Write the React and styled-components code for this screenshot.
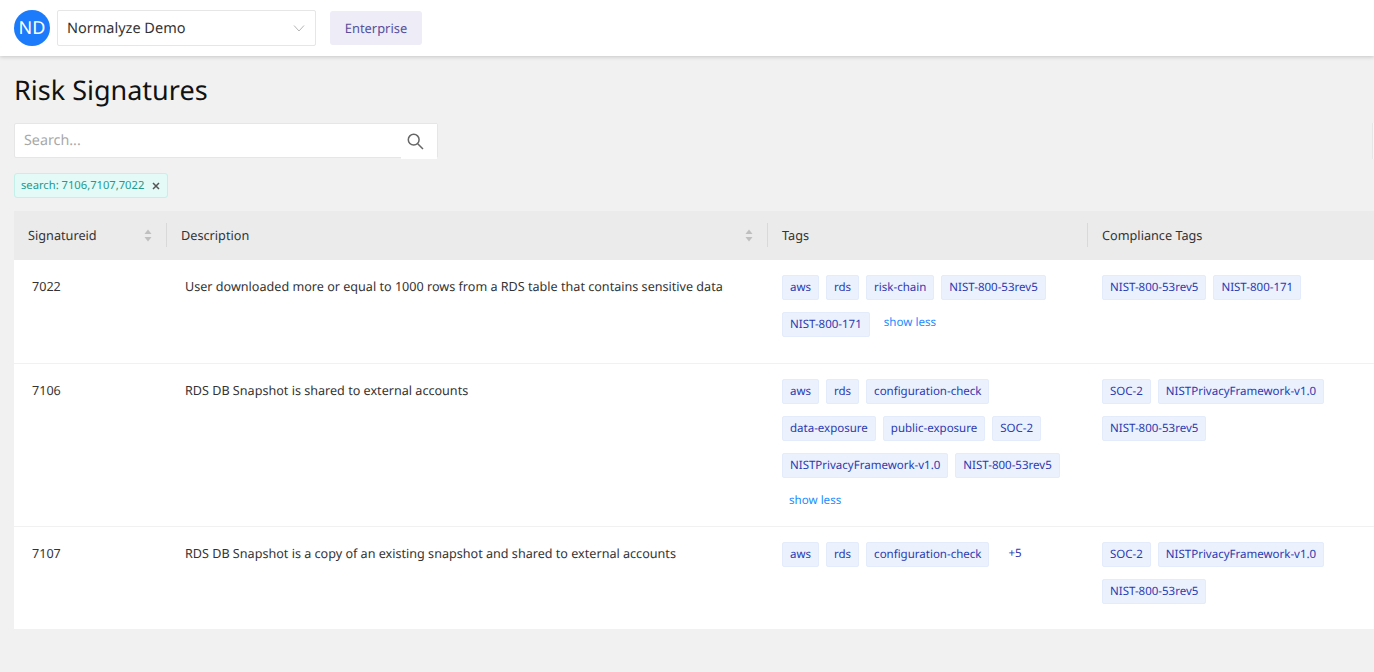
import React from "react";
import styled, { createGlobalStyle } from "styled-components";

const GlobalStyle = createGlobalStyle`
    html, body {
        margin: 0;
        padding: 0;
        background: #f1f1f1;
        font-family: "Noto Sans", "Open Sans", sans-serif;
        text-rendering: geometricPrecision;
    }
    * {
        box-sizing: border-box;
    }
`;

const TopBar = styled.header`
    display: flex;
    align-items: center;
    height: 56px;
    padding: 0 14px;
    background: #fff;
    box-shadow: 0 1px 4px rgba(0, 0, 0, 0.18);
`;

const Avatar = styled.div`
    display: flex;
    align-items: center;
    justify-content: center;
    width: 36px;
    height: 36px;
    border-radius: 50%;
    background: #1b7bfb;
    color: #fff;
    font-size: 18px;
`;

const AccountSelect = styled.div`
    display: flex;
    align-items: center;
    justify-content: space-between;
    width: 259px;
    height: 36px;
    margin-left: 7px;
    padding: 0 10px 0 9px;
    background: #fff;
    border: 1px solid #e6e6e6;
    border-radius: 2px;
    color: #333;
    font-size: 14.5px;
`;

const PlanBadge = styled.div`
    display: flex;
    align-items: center;
    justify-content: center;
    width: 92px;
    height: 34px;
    margin-left: 14px;
    background: #edecf7;
    border-radius: 3px;
    color: #56509c;
    font-size: 12.9px;
`;

const Content = styled.main`
    padding: 15px 0 43px 14px;
`;

const PageTitle = styled.h1`
    margin: 0;
    height: 37px;
    color: #111;
    font-size: 27px;
    font-weight: 400;
    line-height: 38px;
`;

const SearchRow = styled.div`
    display: flex;
    justify-content: space-between;
    margin-top: 15px;
`;

const SearchBox = styled.div`
    display: flex;
    width: 424px;
    height: 35px;
    background: #fff;
    border: 1px solid #e6e6e6;
    border-radius: 2px;
`;

const SearchInput = styled.div`
    flex: 1;
    padding-left: 9px;
    color: #a8a8a8;
    font-size: 14.3px;
    line-height: 33px;
`;

const SearchButton = styled.div`
    display: flex;
    align-items: center;
    justify-content: flex-start;
    width: 36px;
    height: 35px;
    padding-left: 6px;
    background: #fff;
    color: #666;
`;

const EdgeButton = styled.div`
    width: 2px;
    height: 36px;
    background: #f8f8f8;
    border-left: 1px solid #e6e6e6;
`;

const FilterTag = styled.div`
    display: flex;
    align-items: center;
    gap: 8px;
    width: fit-content;
    height: 25px;
    margin-top: 14px;
    padding: 0 7px 0 6px;
    background: #e3faf7;
    border: 1px solid #c4f0ea;
    border-radius: 3px;
    color: #22998f;
    font-size: 11.2px;
`;

const CloseIcon = styled.svg`
    width: 8px;
    height: 8px;
    stroke: #555;
    stroke-width: 1.5;
`;

const Table = styled.section`
    margin-top: 13px;
    background: #fff;
`;

const Columns = styled.div`
    display: grid;
    grid-template-columns: 153px 601px 320px 1fr;
`;

const HeadRow = styled(Columns)`
    height: 49px;
    padding-bottom: 1px;
    background: #ebebeb;
`;

const HeadCell = styled.div`
    position: relative;
    display: flex;
    align-items: center;
    justify-content: space-between;
    padding: 0 14px;
    color: #333;
    font-size: 12.7px;

    &:not(:last-child)::after {
        content: "";
        position: absolute;
        top: 12px;
        right: 0;
        width: 1px;
        height: 24px;
        background: #d9d9d9;
    }
`;

const SortIcon = styled.svg`
    width: 8px;
    height: 13px;
    margin-right: 1px;
    fill: #bfbfbf;
`;

const BodyRow = styled(Columns)`
    border-bottom: 1px solid #f1f1f1;

    &:last-child {
        border-bottom: 0;
    }
`;

const TextCell = styled.div`
    padding: 16px 18px;
    color: #333;
    font-size: 12.6px;
    line-height: 22px;
`;

const TagCell = styled.div`
    display: flex;
    flex-wrap: wrap;
    align-content: flex-start;
    gap: 12px 7px;
    padding: 15px 14px 11px;
    min-height: ${(props) => props.$minHeight || 0}px;
`;

const Tag = styled.span`
    height: 25px;
    padding: 0 7px;
    background: #ebf1fd;
    border: 1px solid #e4ecfb;
    border-radius: 2px;
    color: #2a3ab1;
    font-size: 11.5px;
    line-height: 24px;
    white-space: nowrap;
`;

const ShowLess = styled.a`
    height: 25px;
    padding: 0 7px;
    color: #1a8cff;
    font-size: 11.6px;
    line-height: 22px;
`;

const MoreCount = styled.span`
    height: 25px;
    padding: 0 12px;
    color: #2a3ab1;
    font-size: 11.5px;
    line-height: 24px;
`;

const RISKS = [
    {
        id: "7022",
        description: "User downloaded more or equal to 1000 rows from a RDS table that contains sensitive data",
        tags: ["aws", "rds", "risk-chain", "NIST-800-53rev5", "NIST-800-171"],
        compliance: ["NIST-800-53rev5", "NIST-800-171"],
        showLess: true,
        minHeight: 103,
    },
    {
        id: "7106",
        description: "RDS DB Snapshot is shared to external accounts",
        tags: ["aws", "rds", "configuration-check", "data-exposure", "public-exposure", "SOC-2", "NISTPrivacyFramework-v1.0", "NIST-800-53rev5"],
        compliance: ["SOC-2", "NISTPrivacyFramework-v1.0", "NIST-800-53rev5"],
        showLess: true,
        minHeight: 162,
    },
    {
        id: "7107",
        description: "RDS DB Snapshot is a copy of an existing snapshot and shared to external accounts",
        tags: ["aws", "rds", "configuration-check"],
        compliance: ["SOC-2", "NISTPrivacyFramework-v1.0", "NIST-800-53rev5"],
        more: 5,
        minHeight: 102,
    },
];

function Sorter() {
    return (
        <SortIcon viewBox="0 0 8 13">
            <path d="M4 0.5 L7.5 5 L0.5 5 Z" />
            <path d="M4 12.5 L7.5 8 L0.5 8 Z" />
        </SortIcon>
    );
}

export default function App() {
    return (
        <>
            <GlobalStyle />
            <TopBar>
                <Avatar>ND</Avatar>
                <AccountSelect>
                    Normalyze Demo
                    <svg width="12" height="12" viewBox="0 0 12 12" fill="none" stroke="#b5b5b5" strokeWidth="1">
                        <path d="M1 3.5 L6 9 L11 3.5" />
                    </svg>
                </AccountSelect>
                <PlanBadge>Enterprise</PlanBadge>
            </TopBar>
            <Content>
                <PageTitle>Risk Signatures</PageTitle>
                <SearchRow>
                    <SearchBox>
                        <SearchInput>Search...</SearchInput>
                        <SearchButton>
                            <svg width="17" height="17" viewBox="0 0 17 17" fill="none" stroke="currentColor" strokeWidth="1.5">
                                <circle cx="6.7" cy="6.7" r="5.4" />
                                <path d="M10.7 10.7 L16 16" />
                            </svg>
                        </SearchButton>
                    </SearchBox>
                    <EdgeButton />
                </SearchRow>
                <FilterTag>
                    search: 7106,7107,7022
                    <CloseIcon viewBox="0 0 8 8">
                        <path d="M1 1 L7 7 M7 1 L1 7" />
                    </CloseIcon>
                </FilterTag>
                <Table>
                    <HeadRow>
                        <HeadCell>Signatureid<Sorter /></HeadCell>
                        <HeadCell>Description<Sorter /></HeadCell>
                        <HeadCell>Tags</HeadCell>
                        <HeadCell>Compliance Tags</HeadCell>
                    </HeadRow>
                    {RISKS.map((risk) => (
                        <BodyRow key={risk.id}>
                            <TextCell>{risk.id}</TextCell>
                            <TextCell>{risk.description}</TextCell>
                            <TagCell $minHeight={risk.minHeight}>
                                {risk.tags.map((tag) => <Tag key={tag}>{tag}</Tag>)}
                                {risk.showLess && <ShowLess>show less</ShowLess>}
                                {risk.more && <MoreCount>+{risk.more}</MoreCount>}
                            </TagCell>
                            <TagCell>
                                {risk.compliance.map((tag) => <Tag key={tag}>{tag}</Tag>)}
                            </TagCell>
                        </BodyRow>
                    ))}
                </Table>
            </Content>
        </>
    );
}
